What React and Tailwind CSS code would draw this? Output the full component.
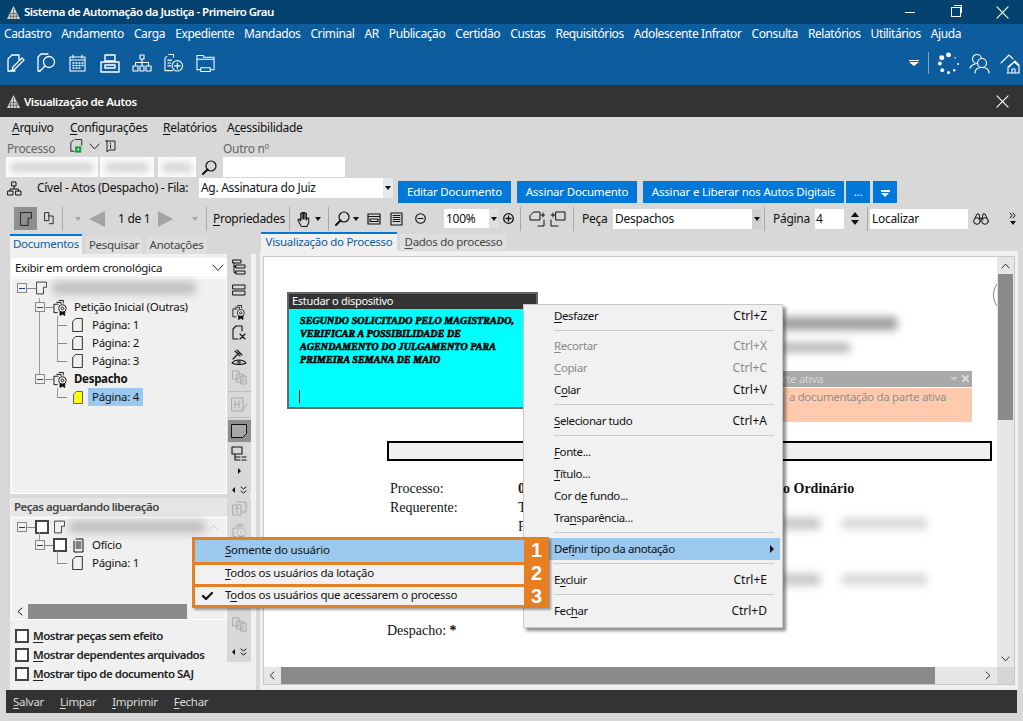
import React from "react";

const S = ({ className = "w-5 h-5", children, vb = "0 0 24 24", sw = 1.5, stroke = "currentColor" }) => (
  <svg viewBox={vb} className={`${className} shrink-0`} fill="none" stroke={stroke} strokeWidth={sw} strokeLinecap="round" strokeLinejoin="round">{children}</svg>
);

const U = ({ t, i = 0 }) => (
  <span>{t.slice(0, i)}<span className="underline underline-offset-2">{t[i]}</span>{t.slice(i + 1)}</span>
);

const Logo = ({ className }) => (
  <svg viewBox="0 0 16 16" className={className}>
    <path d="M8 1 L15 15 H1 Z" fill="#d5d5d5" />
    <path d="M8 4v11M5 9v6M11 9v6M3 12h10M5 9h6" stroke="#555" strokeWidth="0.8" />
  </svg>
);

const topMenu = ["Cadastro", "Andamento", "Carga", "Expediente", "Mandados", "Criminal", "AR", "Publicação", "Certidão", "Custas", "Requisitórios", "Adolescente Infrator", "Consulta", "Relatórios", "Utilitários", "Ajuda"];

const Doc = ({ className = "w-4 h-4", fill = "none", stroke = "#111" }) => (
  <svg viewBox="0 0 12 16" className={`${className} shrink-0`} fill={fill} stroke={stroke} strokeWidth="1">
    <path d="M4 .5H11.5V15.5H.5V4Z" />
  </svg>
);
const Folded = ({ className = "w-4 h-4" }) => (
  <svg viewBox="0 0 14 16" className={`${className} shrink-0`} fill="none" stroke="#111" strokeWidth="1">
    <path d="M.5.5H13.5V7H9.5V15.5H.5Z" />
  </svg>
);
const Seal = ({ className = "w-5 h-5", color = "#111" }) => (
  <svg viewBox="0 0 16 18" className={`${className} shrink-0`} fill="none" stroke={color} strokeWidth="1">
    <path d="M6 1.500h5v3M3.500 3.500h5v2M1 5.500h5M1 5.500v9h4" />
    <circle cx="10" cy="10" r="4" fill="#f0f0f0" />
    <circle cx="10" cy="10" r="1.400" />
    <path d="M7.500 13.500v4l2.500-1.500 2.500 1.500v-4" fill={color} />
  </svg>
);
const Minus = () => (
  <span className="w-[10px] h-[10px] border border-[#888] bg-[#f0f0f0] flex items-center justify-center shrink-0 relative z-10">
    <span className="w-[6px] h-px bg-[#1c3f94]" />
  </span>
);
const Box = ({ className = "w-[14px] h-[14px]" }) => <span className={`${className} border-2 border-[#444] bg-white shrink-0 block`} />;

const Blur = ({ className }) => <div className={`bg-[#9a9a9a] blur-[4px] ${className}`} />;

const Sep = ({ className = "" }) => <div className={`w-px h-[24px] bg-[#a8a8a8] shrink-0 ${className}`} />;

const Caret = ({ className = "" }) => <span className={`w-0 h-0 shrink-0 border-l-[3.5px] border-r-[3.5px] border-t-[4px] border-l-transparent border-r-transparent border-t-[#111] ${className}`} />;

const Pair = ({ className = "" }) => (
  <div className={`flex items-center gap-[5px] ${className}`}>
    <span className="w-0 h-0 border-y-[3px] border-r-[3px] border-y-transparent border-r-[#111]" />
    <S className="w-[7px] h-[8px] text-[#111]" sw={1} vb="0 0 7 8"><path d="M1 1l2.500 2L6 1M1 5l2.500 2L6 5" /></S>
  </div>
);

function Header() {
  return (
    <div className="text-white">
      <div className="h-[24px] bg-[#06426f] flex items-center pl-[6px] relative">
        <Logo className="w-[15px] h-[15px] mr-[3px]" />
        <span className="text-[11.500px] font-semibold tracking-[-0.5px]">Sistema de Automação da Justiça - Primeiro Grau</span>
        <div className="ml-auto flex items-center">
          <span className="w-[10px] h-px bg-white mr-[36px]" />
          <span className="w-[10px] h-[10px] border border-white mr-[35px] relative">
            <span className="absolute -top-[3px] left-[2px] w-[8px] h-[8px] border-t border-r border-white" />
          </span>
          <S className="w-[13px] h-[13px] mr-[14px]" sw={1.200} vb="0 0 14 14"><path d="M1 1l12 12M13 1L1 13" /></S>
        </div>
      </div>
      <div className="bg-[#0c5c9e] h-[61px]">
        <div className="h-[20px] flex items-center pl-[4px] gap-[10px] text-[12px] tracking-[-0.4px] whitespace-nowrap">
          {topMenu.map((m) => <span key={m}>{m}</span>)}
        </div>
        <div className="h-[41px] flex items-center pl-[7px] pb-[3px]">
          <div className="flex items-center gap-[12px]">
            <S className="w-[18px] h-[18px]" sw={1.300} vb="0 0 18 18"><path d="M9 1H5L1 5v12h7M9 1h3v5M5 17l1-4 9-9 2 2-9 9z" /></S>
            <S className="w-[20px] h-[20px]" sw={1.300} vb="0 0 20 20"><path d="M4 1 1 4v14h2M4 1h7" /><circle cx="12" cy="9" r="5.500" /><path d="m8 13-5 5" /></S>
            <S className="w-[17px] h-[18px]" sw={1.100} vb="0 0 17 18"><path d="M1 3h15v14H1zM1 6h15M4 1v3M13 1v3" /><path d="M4 9h1M7 9h1M10 9h1M13 9h1M4 11.500h1M7 11.500h1M10 11.500h1M13 11.500h1M4 14h1M7 14h1M10 14h1" strokeWidth="1.400" /></S>
            <S className="w-[20px] h-[20px] ml-[2px]" sw={1.400} vb="0 0 20 20"><path d="M5 2h10v6H5zM1 9h18v10H1zM5 12h10v3H5z" /></S>
            <S className="w-[20px] h-[18px]" sw={1.100} vb="0 0 20 18"><path d="M8 1h4v4H8zM1 12h5v5H1zM8 12h4v5H8zM14 12h5v5h-5zM10 5v7M3.500 12V8.500h13V12" /></S>
            <S className="w-[20px] h-[20px]" sw={1.100} vb="0 0 21 20"><path d="M5 1H10v3M3 3 1 5v13h8M4 7h4M4 10h3M4 13h3" /><circle cx="14" cy="13" r="5.500" /><path d="M11 13h6M14 10v6" /></S>
            <S className="w-[19px] h-[19px]" sw={1.100} vb="0 0 20 19"><path d="M1 1h7v2h11v13H15M1 1v15h4M1 5h18M5 18v-4h10v4M5 18h10" /></S>
          </div>
          <div className="ml-auto flex items-center">
            <div className="flex flex-col items-center mr-[9px] gap-[1px]">
              <span className="w-[10px] h-[1.500px] bg-white" />
              <span className="w-0 h-0 border-l-[5px] border-r-[5px] border-t-[4px] border-l-transparent border-r-transparent border-t-white" />
            </div>
            <span className="w-px h-[22px] bg-[#7ea6c8] mr-[8px]" />
            <svg viewBox="0 0 24 24" className="w-[23px] h-[23px] mr-[9px]" fill="#fff">
              <circle cx="12" cy="3" r="2.600" /><circle cx="5" cy="6" r="2.600" /><circle cx="3" cy="12" r="2" /><circle cx="5.500" cy="19" r="2" /><circle cx="12" cy="21.500" r="1.600" /><circle cx="18" cy="19" r="1.300" /><circle cx="22" cy="12.500" r="1" /><circle cx="19" cy="6" r="0.800" />
            </svg>
            <S className="w-[21px] h-[21px] mr-[10px]" sw={1.200} vb="0 0 21 21"><circle cx="8" cy="6" r="4.500" /><circle cx="13" cy="10" r="4.500" fill="#0c5c9e" /><path d="M1 15c1-2.500 3-3.500 5-4M6 20c0-4 3-5.500 7-5.500s7 1.500 7 5.500" /></S>
            <S className="w-[20px] h-[21px] mr-[3px]" sw={1.100} vb="0 0 20 21"><path d="M1 10 9 2l4 4M7 20h12v-8l-4-4-6 6M8 20v-6l6-5 5 4M12 20v-4h3v4" /></S>
          </div>
        </div>
      </div>
      <div className="h-[32px] bg-[#333] flex items-center pl-[6px] pt-[1px] relative">
        <Logo className="w-[15px] h-[15px] mr-[3px]" />
        <span className="text-[11.500px] font-semibold tracking-[-0.4px]">Visualização de Autos</span>
        <S className="w-[13px] h-[13px] ml-auto mr-[14px]" sw={1.200} vb="0 0 14 14"><path d="M1 1l12 12M13 1L1 13" /></S>
      </div>
    </div>
  );
}

function TopForm() {
  return (
    <div className="text-[12px] tracking-[-0.3px] text-[#111]">
      <div className="h-[22px] flex items-center pl-[12px] whitespace-nowrap">
        <span className="w-[58px]"><U t="Arquivo" /></span>
        <span className="w-[93px]"><U t="Configurações" /></span>
        <span className="w-[64px]"><U t="Relatórios" /></span>
        <span>A<span className="underline underline-offset-2">c</span>essibilidade</span>
      </div>
      <div className="h-[17px] flex items-center pl-[7px] text-[#666] relative">
        <span className="w-[63px] pt-[2px]">Processo</span>
        <svg viewBox="0 0 14 16" className="w-[13px] h-[14px] mb-[3px]" fill="none" stroke="#111"><path d="M5 .5h8v7M4 1 .5 4v10h4" /><rect x="6" y="9" width="6" height="6" fill="#1a9c3c" stroke="#1a9c3c" /><rect x="8" y="11" width="2" height="2" fill="#fff" stroke="none" /></svg>
        <S className="w-[11px] h-[11px] ml-[6px] mb-[3px] text-[#222]" sw={1} vb="0 0 11 11"><path d="M1 3l4.500 5L10 3" /></S>
        <S className="w-[11px] h-[13px] ml-[5px] mb-[3px] text-[#222]" sw={1} vb="0 0 11 13"><path d="M1 1h9v9H4l-2 2V1zM5.500 3v.5M5.500 5v3" /></S>
        <span className="ml-[107px] pt-[2px]">Outro nº</span>
      </div>
      <div className="h-[22px] flex items-center pl-[6px]">
        <div className="w-[92px] h-[20px] bg-white overflow-hidden"><Blur className="h-[9px] mt-[6px] ml-[4px] mr-[4px] opacity-50" /></div>
        <div className="w-[54px] h-[20px] bg-white overflow-hidden ml-[2px]"><Blur className="h-[9px] mt-[6px] mx-[5px] opacity-50" /></div>
        <div className="w-[38px] h-[20px] bg-white overflow-hidden ml-[4px]"><Blur className="h-[9px] mt-[6px] mx-[4px] opacity-50" /></div>
        <S className="w-[15px] h-[15px] ml-[6px] text-[#111]" sw={1.200} vb="0 0 15 15"><circle cx="9" cy="6" r="5" /><path d="M5.500 9.500 1 14" strokeWidth="2" /></S>
        <div className="w-[122px] h-[20px] bg-white ml-[6px]" />
      </div>
      <div className="h-[27px] flex pl-[7px]">
        <S className="w-[15px] h-[15px] mt-[3px] text-[#111]" sw={1} vb="0 0 15 15"><path d="M5 1h4v4H5zM1 10h5v4H1zM9 10h5v4H9zM7 5v3H3v2M7 8h4.500v2" /></S>
        <span className="ml-[15px] mt-[1px] whitespace-nowrap w-[162px]">Cível - Atos (Despacho) - Fila:</span>
        <div className="w-[194px] h-[20px] bg-white flex items-center pl-[2px] relative">
          <span>Ag. Assinatura do Juiz</span>
          <span className="absolute right-0 top-0 w-[10px] h-[20px] bg-[#e8e8e8] flex items-center justify-center"><Caret /></span>
        </div>
        <div className="flex mt-[3px] ml-[5px] text-white text-[11.500px] tracking-[-0.2px]">
          <span className="w-[113px] h-[22px] bg-[#0078d7] flex items-center justify-center">Editar Documento</span>
          <span className="w-[120px] h-[22px] bg-[#0078d7] flex items-center justify-center ml-[6px]">Assinar Documento</span>
          <span className="w-[201px] h-[22px] bg-[#0078d7] flex items-center justify-center ml-[6px]">Assinar e Liberar nos Autos Digitais</span>
          <span className="w-[24px] h-[22px] bg-[#0078d7] flex items-center justify-center ml-[2px]">...</span>
          <span className="w-[24px] h-[22px] bg-[#0078d7] flex flex-col items-center justify-center gap-[1px] ml-[3px]">
            <span className="w-[9px] h-[1.500px] bg-white mt-[3px]" />
            <span className="w-0 h-0 border-l-[4.500px] border-r-[4.500px] border-t-[4px] border-l-transparent border-r-transparent border-t-white" />
          </span>
        </div>
      </div>
      <Toolbar />
    </div>
  );
}

function Toolbar() {
  return (
    <div className="h-[25px] flex items-center pl-[14px] mt-[1px] whitespace-nowrap">
      <span className="w-[23px] h-[23px] bg-[#8f8f8f] flex items-center justify-center shrink-0"><Folded className="w-[12px] h-[14px]" /></span>
      <svg viewBox="0 0 14 16" className="w-[12px] h-[14px] ml-[5px] shrink-0" fill="none" stroke="#111"><path d="M3 .5h5v4h5v9H8M3 .5V10h5V4" /></svg>
      <Sep className="ml-[8px]" />
      <Caret className="ml-[12px] opacity-25" />
      <span className="w-0 h-0 border-y-[8px] border-r-[16px] border-y-transparent border-r-[#a3a3a3] ml-[8px] shrink-0" />
      <span className="ml-[13px] w-[31px] shrink-0">1 de 1</span>
      <span className="w-0 h-0 border-y-[8px] border-l-[15px] border-y-transparent border-l-[#a3a3a3] ml-[9px] shrink-0" />
      <Caret className="ml-[19px] opacity-25" />
      <Sep className="ml-[8px]" />
      <span className="ml-[6px] w-[69px] shrink-0"><U t="Propriedades" /></span>
      <Sep className="ml-[7px]" />
      <S className="w-[15px] h-[18px] ml-[7px] text-[#111]" sw={1.100} vb="0 0 16 18"><path d="M4 16 1 10l1.500-1L4 11V3h1.500v6V2H7v7V2h1.500v7V3H10v7l1-2h1.500v5l-2 4H5z" /></S>
      <Caret className="ml-[3px]" />
      <Sep className="ml-[7px]" />
      <S className="w-[15px] h-[15px] ml-[6px] text-[#111]" sw={1.200} vb="0 0 15 15"><circle cx="9" cy="6" r="5" /><path d="M5.500 9.500 1 14" strokeWidth="2" /></S>
      <Caret className="ml-[3px]" />
      <S className="w-[14px] h-[12px] ml-[8px] text-[#111]" sw={1.200} vb="0 0 14 12"><path d="M1 1h12v10H1zM1 3.500h12M3 6h8v2.500H3z" /></S>
      <S className="w-[13px] h-[14px] ml-[9px] text-[#111]" sw={1.100} vb="0 0 13 14"><path d="M1 1h11v12H1zM3 3.500h7M3 5.500h7M3 7.500h7M3 9.500h7" /></S>
      <S className="w-[11px] h-[11px] ml-[12px] text-[#111]" sw={1.100} vb="0 0 11 11"><circle cx="5.500" cy="5.500" r="4.800" /><path d="M3 5.500h5" /></S>
      <div className="w-[54px] h-[19px] bg-white ml-[18px] flex items-center pl-[2px] relative shrink-0">100%
        <span className="absolute right-0 top-0 h-[19px] w-[9px] bg-[#e0e0e0] flex items-center justify-center"><Caret /></span>
      </div>
      <S className="w-[11px] h-[11px] ml-[5px] text-[#111]" sw={1.300} vb="0 0 11 11"><circle cx="5.500" cy="5.500" r="4.800" /><path d="M3 5.500h5M5.500 3v5" /></S>
      <Sep className="ml-[6px]" />
      <S className="w-[16px] h-[16px] ml-[8px] text-[#111]" sw={1} vb="0 0 16 16"><path d="M5 1h6v8H1V5zM14 2v4M12 4h4M9 15h6V9" /></S>
      <S className="w-[16px] h-[16px] ml-[5px] text-[#111]" sw={1} vb="0 0 16 16"><path d="M6 1h9v8H6zM3 2v4M1 4h4M1 9v6h7" /></S>
      <Sep className="ml-[7px]" />
      <span className="ml-[8px] w-[25px] shrink-0">Peça</span>
      <div className="w-[149px] h-[20px] bg-white flex items-center pl-[2px] ml-[6px] relative shrink-0">Despachos
        <span className="absolute right-0 top-0 h-[20px] w-[10px] bg-[#d0d0d0] flex items-center justify-center"><Caret /></span>
      </div>
      <Sep className="ml-[2px]" />
      <span className="ml-[8px] w-[37px] shrink-0">Página</span>
      <div className="w-[29px] h-[20px] bg-white ml-[5px] pl-[1px] flex items-center shrink-0">4</div>
      <div className="flex flex-col gap-[3px] ml-[7px] shrink-0">
        <span className="w-0 h-0 border-l-[4px] border-r-[4px] border-b-[5px] border-l-transparent border-r-transparent border-b-[#111]" />
        <span className="w-0 h-0 border-l-[4px] border-r-[4px] border-t-[5px] border-l-transparent border-r-transparent border-t-[#111]" />
      </div>
      <Sep className="ml-[8px]" />
      <div className="w-[98px] h-[20px] bg-white ml-[2px] pl-[2px] flex items-center shrink-0">Localizar</div>
      <S className="w-[16px] h-[12px] ml-[5px] text-[#111]" sw={1} vb="0 0 16 12"><circle cx="4" cy="8" r="3.300" /><circle cx="12" cy="8" r="3.300" /><path d="M6 6c1-1 3-1 4 0M2 5l2-4h2l1 5M14 5l-2-4h-2L9 6" /></S>
      <div className="ml-[20px] flex flex-col items-center gap-[2px] shrink-0">
        <S className="w-[7px] h-[7px] text-[#111]" sw={1} vb="0 0 7 7"><path d="M1 1l2 2.500L1 6M4 1l2 2.500L4 6" /></S>
        <Caret />
      </div>
    </div>
  );
}

function TreeRow({ pad, children, className = "" }) {
  return <div className={`h-[18px] flex items-center relative ${pad} ${className}`}>{children}</div>;
}

const Dash = ({ w }) => <span className={`${w} h-px bg-[#888] shrink-0`} />;

function SideTools() {
  const g = "#a8a8a8";
  return (
    <div className="w-[24px] flex flex-col items-center bg-[#d8d8d8] text-[#111] pt-[4px]">
      <div className="h-[18px] flex items-center"><S className="w-[14px] h-[16px]" sw={1} vb="0 0 14 16"><path d="M1 1h8v3H1zM4 6h9v3H4zM4 12h9v3H4zM2 4v9.500h2M2 7.500h2" /></S></div>
      <div className="h-[28px] flex items-center"><S className="w-[14px] h-[12px]" sw={1} vb="0 0 14 12"><path d="M1 1h12v4H1zM1 7h12v4H1z" /></S></div>
      <div className="h-[16px] flex items-center"><Seal className="w-[14px] h-[16px]" /></div>
      <div className="h-[26px] flex items-center"><S className="w-[14px] h-[16px]" sw={1} vb="0 0 14 16"><path d="M4 1h6v5M4 1 1 4v10h5M8 9l5 5M13 9l-5 5" strokeWidth="1.100" /></S></div>
      <div className="h-[22px] flex items-center"><S className="w-[16px] h-[16px]" sw={1.100} vb="0 0 16 16"><path d="M2 10 8 4M4 2l5 5M6 1l5 5M1 14c3-4 11-4 14 0-3 2-11 2-14 0z" /><circle cx="8" cy="13" r="1.200" /></S></div>
      <div className="h-[20px] flex items-center"><S className="w-[15px] h-[15px]" sw={1} stroke={g} vb="0 0 15 15"><path d="M1 1h6v8H1zM5 4h6v8H5zM9 6h5v8H9z" /></S></div>
      <div className="h-px w-[23px] bg-[#bdbdbd] mt-[4px]" />
      <div className="h-[25px] flex items-center"><S className="w-[17px] h-[15px]" sw={1} stroke={g} vb="0 0 17 15"><path d="M1 1h11v13H1zM4 4v7M8 4v7M4 7.500h4M11 13l5-6" /></S></div>
      <div className="h-px w-[23px] bg-[#bdbdbd]" />
      <div className="w-[23px] h-[22px] bg-[#8f8f8f] flex items-center justify-center mt-[2px]"><svg viewBox="0 0 16 14" className="w-[16px] h-[14px]" fill="#a8a8a8" stroke="#111"><path d="M.5.500h15v9l-4 4H.5z" /></svg></div>
      <div className="h-[24px] flex items-center"><S className="w-[16px] h-[16px]" sw={1.100} vb="0 0 16 16"><path d="M1 1h10v7H1zM4 8v6h5M4 11h5M11 11h4M11 14h4" /></S></div>
      <span className="w-0 h-0 border-y-[3px] border-l-[3px] border-y-transparent border-l-[#111] mt-[2px]" />
      <Pair className="mt-[12px]" />
    </div>
  );
}

function Left() {
  return (
    <div className="w-[246px] flex flex-col ml-[10px] shrink-0 text-[11.500px] tracking-[-0.3px]">
      <div className="flex h-[20px] items-start">
        <span className="h-[20px] w-[72px] pb-[3px] bg-[#f0f0f0] border-t-2 border-[#0078d7] flex items-center justify-center text-[#0c5c9e]">Documentos</span>
        <span className="h-[18px] w-[56px] mt-[2px] pb-[1px] bg-[#dedede] ml-[4px] flex items-center justify-center text-[#444]">Pesquisar</span>
        <span className="h-[18px] w-[61px] mt-[2px] pb-[1px] bg-[#dedede] ml-[4px] flex items-center justify-center text-[#444]">Anotações</span>
      </div>
      <div className="flex-1 bg-[#f0f0f0] flex flex-col min-h-0 relative">
        <div className="flex h-[240px]">
          <div className="w-[216px] ml-px flex flex-col mt-[4px]">
            <div className="h-[19px] bg-white flex items-center pl-[4px] justify-between pr-[3px]">
              <span>Exibir em ordem cronológica</span>
              <S className="w-[12px] h-[8px] text-[#222]" sw={1} vb="0 0 12 8"><path d="M1 1l5 5.500L11 1" /></S>
            </div>
            <div className="flex-1 border border-[#fff] mt-[1px] relative">
              <TreeRow pad="pl-[5px]" className="mb-[1px]"><Minus /><Dash w="w-[9px]" /><Folded className="w-[11px] h-[14px]" /><Blur className="w-[142px] h-[12px] ml-[6px] opacity-60" /></TreeRow>
              <TreeRow pad="pl-[23px]"><Minus /><Dash w="w-[8px]" /><Seal className="w-[15px] h-[17px]" /><span className="ml-[6px]">Petição Inicial (Outras)</span></TreeRow>
              {[1, 2, 3].map((n) => (
                <TreeRow key={n} pad="pl-[45px]"><Dash w="w-[10px]" /><Doc className="w-[11px] h-[14px] ml-[5px]" /><span className="ml-[9px]">Página: {n}</span></TreeRow>
              ))}
              <TreeRow pad="pl-[23px]"><Minus /><Dash w="w-[8px]" /><Seal className="w-[15px] h-[17px]" /><span className="ml-[6px] font-bold">Despacho</span></TreeRow>
              <TreeRow pad="pl-[45px]"><Dash w="w-[10px]" /><Doc className="w-[10px] h-[13px] ml-[6px]" fill="#ffff00" stroke="#1c3f94" /><span className="ml-[5px] bg-[#9bc8ee] px-[4px] h-[18px] flex items-center">Página: 4</span></TreeRow>
              <span className="absolute left-[27px] top-[19px] w-px h-[82px] bg-[#999]" />
              <span className="absolute left-[45px] top-[37px] w-px h-[45px] bg-[#999]" />
              <span className="absolute left-[45px] top-[109px] w-px h-[9px] bg-[#999]" />
            </div>
          </div>
          <SideTools />
        </div>
        <div className="h-[4px] bg-[#d8d8d8] mr-[6px]" />
        <div className="flex">
          <div className="w-[216px] ml-px">
            <div className="h-[18px] bg-[#e6e6e6] flex items-center pl-[3px] text-[#444] font-semibold tracking-[-0.5px]">Peças aguardando liberação</div>
            <div className="h-[103px] border border-white relative mt-[1px] flex flex-col">
              <TreeRow pad="pl-[5px]"><Minus /><Dash w="w-[8px]" /><Box className="w-[14px] h-[14px]" /><Folded className="w-[11px] h-[14px] ml-[5px]" /><Blur className="w-[136px] h-[12px] ml-[4px] opacity-60" /><S className="w-[9px] h-[6px] text-[#ccc] ml-[4px]" sw={1} vb="0 0 9 6"><path d="M1 5l3.500-4L8 5" /></S></TreeRow>
              <TreeRow pad="pl-[23px]"><Minus /><Dash w="w-[8px]" /><Box className="w-[14px] h-[14px]" /><S className="w-[12px] h-[15px] ml-[6px] text-[#111]" sw={1} vb="0 0 12 15"><path d="M3 1h7v13H1V3M3 4h5M3 6h5M3 8h5M3 10h5" /></S><span className="ml-[7px]">Ofício</span></TreeRow>
              <TreeRow pad="pl-[45px]"><Dash w="w-[10px]" /><Doc className="w-[11px] h-[14px] ml-[5px]" /><span className="ml-[9px]">Página: 1</span></TreeRow>
              <span className="absolute left-[27px] top-[14px] w-px h-[8px] bg-[#999]" />
              <span className="absolute left-[45px] top-[33px] w-px h-[12px] bg-[#999]" />
              <div className="mt-auto h-[15px] flex items-center">
                <S className="w-[16px] h-[9px] text-[#111]" sw={1} vb="0 0 16 9"><path d="M10 1 6 4.500 10 8" /></S>
                <span className="w-[159px] h-[15px] bg-[#8a8a8a]" />
              </div>
            </div>
          </div>
          <div className="w-[24px] h-[164px] bg-[#d8d8d8] flex flex-col items-center pt-[3px]">
            <S className="w-[15px] h-[15px]" sw={1} stroke="#a8a8a8" vb="0 0 15 15"><path d="M5 1h9v10H9M1 4h8v10H1zM5 6v6M3 8l2-2 2 2" /></S>
            <div className="mt-[7px]"><Seal className="w-[15px] h-[17px]" color="#a8a8a8" /></div>
            <div className="mt-[77px]"><S className="w-[15px] h-[15px]" sw={1} stroke="#a8a8a8" vb="0 0 15 15"><path d="M1 1h6v8H1zM5 4h6v8H5zM9 6h5v8H9z" /></S></div>
            <Pair className="mt-[16px]" />
          </div>
        </div>
        <div className="absolute left-[5px] top-[374px] flex flex-col gap-[4px] font-semibold tracking-[-0.5px] text-[#222]">
          {["Mostrar peças sem efeito", "Mostrar dependentes arquivados", "Mostrar tipo de documento SAJ"].map((t) => (
            <div key={t} className="h-[15px] flex items-center gap-[4px]"><Box className="w-[14px] h-[14px]" /><span className="whitespace-nowrap"><U t={t} /></span></div>
          ))}
        </div>
      </div>
    </div>
  );
}

function Page() {
  return (
    <div className="relative flex-1 bg-white border border-[#c8c8c8] overflow-hidden font-['Liberation_Serif',serif] text-[14px] tracking-normal text-[#111]">
      <div className="absolute left-[729px] top-[18px] w-[40px] h-[40px] rounded-full border border-[#888]" />
      <div className="absolute right-0 top-0 bottom-0 w-[17px] bg-[#e6e6e6] z-10">
        <div className="h-[17px] flex items-center justify-center">
          <S className="w-[9px] h-[6px] text-[#333]" sw={1} vb="0 0 9 6"><path d="M1 5l3.500-4L8 5" /></S>
        </div>
        <div className="w-[15px] ml-px h-[146px] bg-[#8a8a8a]" />
        <div className="absolute bottom-[17px] left-0 w-[17px] h-[16px] flex items-center justify-center">
          <S className="w-[9px] h-[6px] text-[#333]" sw={1} vb="0 0 9 6"><path d="M1 1l3.500 4L8 1" /></S>
        </div>
        <div className="absolute bottom-0 left-0 w-[17px] h-[17px] bg-[#d6d6d6]" />
      </div>
      <div className="absolute left-0 right-[17px] bottom-0 h-[17px] bg-[#e6e6e6] z-10 flex items-center">
        <S className="w-[17px] h-[9px] text-[#333]" sw={1} vb="0 0 17 9"><path d="M10 1 6 4.500 10 8" /></S>
        <div className="w-[654px] h-[17px] bg-[#8a8a8a]" />
        <S className="w-[9px] h-[9px] text-[#333] ml-auto mr-[4px]" sw={1} vb="0 0 9 9"><path d="M2 1l4 3.500L2 8" /></S>
      </div>
      <div className="pl-[123px] pr-[22px] pt-[184px]">
        <div className="h-[20px] border-2 border-black bg-[#f0f0f0]" />
        <div className="ml-[3px] mt-[18px] grid grid-cols-[128px_1fr] leading-[19px]">
          <span>Processo:</span><b>0</b>
          <span>Requerente:</span><span>T</span>
          <span /><span>F</span>
        </div>
      </div>
      <div className="absolute left-[123px] top-[363px]">Despacho: <b>*</b></div>
      <b className="absolute left-[519px] top-[221px]">o Ordinário</b>
      <Blur className="absolute left-[518px] top-[60px] w-[115px] h-[13px]" />
      <Blur className="absolute left-[518px] top-[86px] w-[68px] h-[9px] opacity-80" />
      <Blur className="absolute left-[518px] top-[261px] w-[38px] h-[11px] opacity-60" />
      <Blur className="absolute left-[578px] top-[261px] w-[85px] h-[11px] opacity-40" />
      <Blur className="absolute left-[518px] top-[317px] w-[38px] h-[11px] opacity-60" />
      <Blur className="absolute left-[578px] top-[317px] w-[85px] h-[11px] opacity-40" />
      <div className="absolute left-[23px] top-[35px] w-[251px] h-[117px] border-2 border-[#666] bg-[#00ffff] z-20">
        <div className="h-[15px] bg-[#333] text-white text-[11px] tracking-[-0.3px] flex items-center pl-[3px] font-['Noto_Sans',sans-serif]">
          Estudar o dispositivo
        </div>
        <div className="pl-[11px] pt-[5px] font-['Liberation_Serif',serif] font-bold italic text-[10px] leading-[13px] text-black [-webkit-text-stroke:0.6px_black] tracking-[0.1px]">
          SEGUNDO SOLICITADO PELO MAGISTRADO,<br />VERIFICAR A POSSIBILIDADE DE<br />AGENDAMENTO DO JULGAMENTO PARA<br />PRIMEIRA SEMANA DE MAIO
        </div>
        <span className="absolute left-[10px] bottom-[4px] w-px h-[13px] bg-[#a00000]" />
      </div>
      <div className="absolute left-[420px] top-[114px] w-[288px] z-20 font-['Noto_Sans',sans-serif] text-[11.500px] tracking-[-0.35px]">
        <div className="h-[16px] bg-[#a9a9a9] text-[#d6d6d6] flex items-center justify-end pr-[149px] relative whitespace-nowrap">
          parte ativa
          <span className="absolute right-[14px] top-[6px] w-0 h-0 border-l-[4px] border-r-[4px] border-t-[4px] border-l-transparent border-r-transparent border-t-[#ccc]" />
          <S className="absolute right-[3px] top-[4px] w-[7px] h-[7px] text-[#ddd]" sw={2} vb="0 0 7 7"><path d="M1 1l5 5M6 1 1 6" /></S>
        </div>
        <div className="h-[34px] mt-px bg-[#ffcaae] text-[#8f8f8f] flex justify-end pr-[26px] whitespace-nowrap">a documentação da parte ativa</div>
      </div>
    </div>
  );
}

const MenuItem = ({ t, i, k, off, sel, arrow }) => (
  <div className={`h-[22px] flex items-center pl-[30px] pr-[15px] ${sel ? "bg-[#9bc8ee] mr-[2px]" : ""} ${off ? "text-[#8a8a8a]" : "text-[#111]"}`}>
    <U t={t} i={i} />
    {k && <span className="ml-auto text-[12px] tracking-normal">{k}</span>}
    {arrow && <span className="ml-auto -mr-[9px] w-0 h-0 border-y-[4px] border-l-[4px] border-y-transparent border-l-[#111]" />}
  </div>
);
const MSep = ({ first }) => <div className={`h-px bg-[#c8c8c8] ml-[30px] mr-[8px] mt-[3px] ${first ? "mb-[4px]" : "mb-[5px]"}`} />;

function ContextMenu() {
  return (
    <div className="absolute left-[523px] top-[304px] w-[260px] h-[324px] bg-[#f1f1f1] border border-[#c8c8c8] shadow-[3px_3px_3px_rgba(0,0,0,0.45)] text-[11.500px] tracking-[-0.4px] z-30 font-['Noto_Sans',sans-serif]">
      <MenuItem t="Desfazer" k="Ctrl+Z" />
      <MSep first />
      <MenuItem t="Recortar" k="Ctrl+X" off />
      <MenuItem t="Copiar" k="Ctrl+C" off />
      <MenuItem t="Colar" i={1} k="Ctrl+V" />
      <MSep />
      <MenuItem t="Selecionar tudo" k="Ctrl+A" />
      <MSep />
      <MenuItem t="Fonte..." />
      <MenuItem t="Título..." />
      <MenuItem t="Cor de fundo..." i={5} />
      <MenuItem t="Transparência..." i={3} />
      <MSep />
      <MenuItem t="Definir tipo da anotação" i={3} sel arrow />
      <MSep />
      <MenuItem t="Excluir" i={1} k="Ctrl+E" />
      <MSep />
      <MenuItem t="Fechar" i={3} k="Ctrl+D" />
    </div>
  );
}

function SubMenu() {
  const rows = [
    { n: "1", t: "Somente do usuário", i: 0, cls: "h-[25px] bg-[#9bc8ee]", txt: "pt-[2px]", num: "-mt-[3px]" },
    { n: "2", t: "Todos os usuários da lotação", i: 0, cls: "h-[22px] bg-[#f1f1f1]", txt: "pt-0", num: "-mt-[3px]" },
    { n: "3", t: "Todos os usuários que acessarem o processo", i: 1, cls: "h-[24px] bg-[#f1f1f1] border-b-[3px]", txt: "pt-0", num: "-mt-[3px] -mb-[3px]", check: true },
  ];
  return (
    <div className="absolute left-[192px] top-[537px] w-[357px] z-40 font-['Noto_Sans',sans-serif] text-[11.500px] tracking-[-0.25px] text-[#111] shadow-[2px_2px_2px_rgba(0,0,0,0.35)]">
      {rows.map((r) => (
        <div key={r.n} className={`flex ${r.cls} border-t-[3px] border-l-[3px] border-[#e67e22] relative`}>
          {r.check && <S className="absolute left-[6px] top-[4px] w-[13px] h-[10px] text-[#111]" sw={2.200} vb="0 0 13 10"><path d="M2 5l3 3 6-6" /></S>}
          <span className={`pl-[30px] flex-1 leading-[16px] ${r.txt}`}><U t={r.t} i={r.i} /></span>
          <span className={`w-[25px] ${r.num} bg-[#e67e22] text-white font-bold text-[20px] tracking-normal leading-[20px] flex items-center justify-center font-['Liberation_Sans',sans-serif]`}>{r.n}</span>
        </div>
      ))}
    </div>
  );
}

export default function App() {
  return (
    <div className="relative w-[1023px] h-[721px] overflow-hidden bg-[#d8d8d8] font-['Noto_Sans',sans-serif] flex flex-col">
      <Header />
      <TopForm />
      <div className="flex flex-1 min-h-0 text-[#111] pt-[3px]">
        <Left />
        <div className="flex-1 ml-[4px] mr-[5px] -mt-[2px] flex flex-col text-[11.500px] tracking-[-0.3px]">
          <div className="flex h-[19px] items-start">
            <span className="h-[19px] w-[136px] ml-px pb-[2px] bg-[#f0f0f0] border-t-2 border-[#0078d7] flex items-center justify-center text-[#0c5c9e]">Visualização do Processo</span>
            <span className="h-[16px] w-[107px] mt-[2px] pb-[1px] bg-[#dedede] ml-[3px] flex items-center justify-center text-[#444]"><U t="Dados do processo" /></span>
          </div>
          <div className="bg-[#f0f0f0] flex-1 flex flex-col pt-[5px] pl-[3px] pr-[3px] pb-[5px] min-h-0">
            <Page />
          </div>
        </div>
      </div>
      <div className="h-[23px] bg-[#333] mx-[6px] text-[#dcdcdc] text-[11.500px] tracking-[-0.3px] flex items-center pl-[7px] gap-[16px] shrink-0">
        <U t="Salvar" /><U t="Limpar" /><U t="Imprimir" /><U t="Fechar" />
      </div>
      <div className="h-[8px] shrink-0" />
      <ContextMenu />
      <SubMenu />
    </div>
  );
}
